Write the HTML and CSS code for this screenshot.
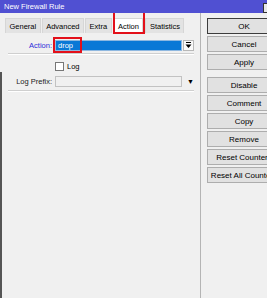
FILE: index.html
```html
<!DOCTYPE html>
<html lang="en">
<head>
    <meta charset="UTF-8">
    <title>New Firewall Rule</title>
    <link rel="stylesheet" href="styles.css">
</head>
<body>
    <div class="window">
        <div class="titlebar">
            <span class="title">New Firewall Rule</span>
            <span class="winbtn"></span>
        </div>
        <div class="main">
            <div class="left">
                <div class="tabs">
                    <div class="tab">General</div>
                    <div class="tab">Advanced</div>
                    <div class="tab">Extra</div>
                    <div class="tab active marked">Action</div>
                    <div class="tab">Statistics</div>
                </div>

                <div class="row action-row">
                    <label class="label blue">Action:</label>
                    <div class="field selected marked"><span class="sel">drop</span></div>
                    <div class="dropbtn">
                        <svg width="7" height="7" viewBox="0 0 7 7">
                            <rect x="1" y="0" width="5" height="1" fill="#000"/>
                            <polygon points="0.5,2.5 6.5,2.5 3.5,6" fill="#000"/>
                        </svg>
                    </div>
                </div>
                <div class="sep first"></div>

                <div class="row check-row">
                    <span class="check"></span>
                    <span>Log</span>
                </div>

                <div class="row prefix-row">
                    <label class="label">Log Prefix:</label>
                    <div class="field disabled"></div>
                    <span class="arrow">&#9660;</span>
                </div>
                <div class="sep"></div>
            </div>

            <div class="right">
                <button class="btn default">OK</button>
                <button class="btn">Cancel</button>
                <button class="btn">Apply</button>
                <button class="btn group">Disable</button>
                <button class="btn">Comment</button>
                <button class="btn">Copy</button>
                <button class="btn">Remove</button>
                <button class="btn">Reset Counters</button>
                <button class="btn">Reset All Counters</button>
            </div>
        </div>
    </div>
</body>
</html>
```

FILE: styles.css
```css
body {
    margin: 0;
    width: 267px;
    height: 298px;
    overflow: hidden;
    background-color: #f0f0f0;
    font-family: 'Liberation Sans', Arial, sans-serif;
    font-size: 7.5px;
    color: #000;
}

.window {
    width: 267px;
    height: 298px;
    display: flex;
    flex-direction: column;
}

.titlebar {
    height: 13px;
    background-color: #5050d2;
    color: white;
    display: flex;
    align-items: center;
    padding-left: 4px;
    overflow: hidden;
    flex-shrink: 0;
}

.winbtn {
    margin-left: auto;
    margin-right: -8px;
    margin-top: 2px;
    width: 10px;
    height: 8px;
    background-color: #e8e8e8;
    border: 1px solid #333;
    flex-shrink: 0;
}

.main {
    flex: 1;
    display: flex;
    overflow: hidden;
}

.left {
    width: 200px;
    flex-shrink: 0;
    border-right: 1px solid #b4b4b4;
    background: linear-gradient(#555, #555) 0 59px / 2px 100% no-repeat;
}

/* tabs */
.tabs {
    display: flex;
    gap: 1px;
    margin: 5px 0 0 5px;
    height: 15px;
}

.tab {
    position: relative;
    padding: 0 3.5px;
    background-color: #e3e3e3;
    border: 1px solid #d6d6d6;
    border-bottom: none;
    display: flex;
    align-items: center;
}

.tab.active {
    background-color: #fff;
    margin: 0 1px;
}

.tab.marked::after {
    content: '';
    position: absolute;
    top: -8px;
    left: -2px;
    right: -3px;
    bottom: -1px;
    border: 2px solid #e3101a;
}

/* form rows */
.row {
    display: flex;
    align-items: center;
}

.label {
    width: 55px;
    text-align: right;
    padding-right: 3px;
    box-sizing: border-box;
    color: #222;
}

.label.blue {
    color: #2b2bd8;
}

.action-row {
    margin-top: 6px;
    height: 12px;
}

.field {
    width: 127px;
    height: 11px;
    box-sizing: border-box;
    border: 1px solid #c2c2c2;
    display: flex;
    align-items: center;
}

.field.selected {
    position: relative;
    background-color: #0a78d6;
    border-color: #8fb8e0;
    color: #fff;
}

.field.marked::after {
    content: '';
    position: absolute;
    top: -4px;
    left: -3px;
    width: 25px;
    height: 12px;
    border: 2px solid #e3101a;
}

.sel {
    padding-left: 2px;
}

.field.disabled {
    background-color: #f0f0f0;
}

.dropbtn {
    margin-left: 1px;
    width: 11px;
    height: 11px;
    box-sizing: border-box;
    border: 1px solid #b8b8b8;
    background-color: #fafafa;
    display: flex;
    align-items: center;
    justify-content: center;
}

.sep {
    margin: 3px 0 0 8px;
    width: 186px;
    height: 1px;
    background-color: #cfcfcf;
    border-bottom: 1px solid #fff;
}

.sep.first {
    margin-top: 2px;
}

.check-row {
    margin-top: 6px;
    padding-left: 55px;
    height: 10px;
    gap: 3px;
}

.check {
    width: 9px;
    height: 9px;
    box-sizing: border-box;
    border: 1px solid #777;
    background-color: #fff;
}

.prefix-row {
    margin-top: 5px;
    height: 11px;
}

.arrow {
    margin-left: 5px;
    font-size: 7px;
}

/* buttons */
.right {
    padding: 5px 0 0 6px;
    display: flex;
    flex-direction: column;
    gap: 2px;
}

.btn {
    width: 74px;
    height: 16px;
    flex-shrink: 0;
    padding: 0;
    border: 1px solid #adadad;
    background-color: #e1e1e1;
    font-family: inherit;
    font-size: 8px;
    color: #000;
    white-space: nowrap;
    overflow: hidden;
}

.btn.default {
    border-color: #3c3c3c;
}

.btn.group {
    margin-top: 5px;
}
```
